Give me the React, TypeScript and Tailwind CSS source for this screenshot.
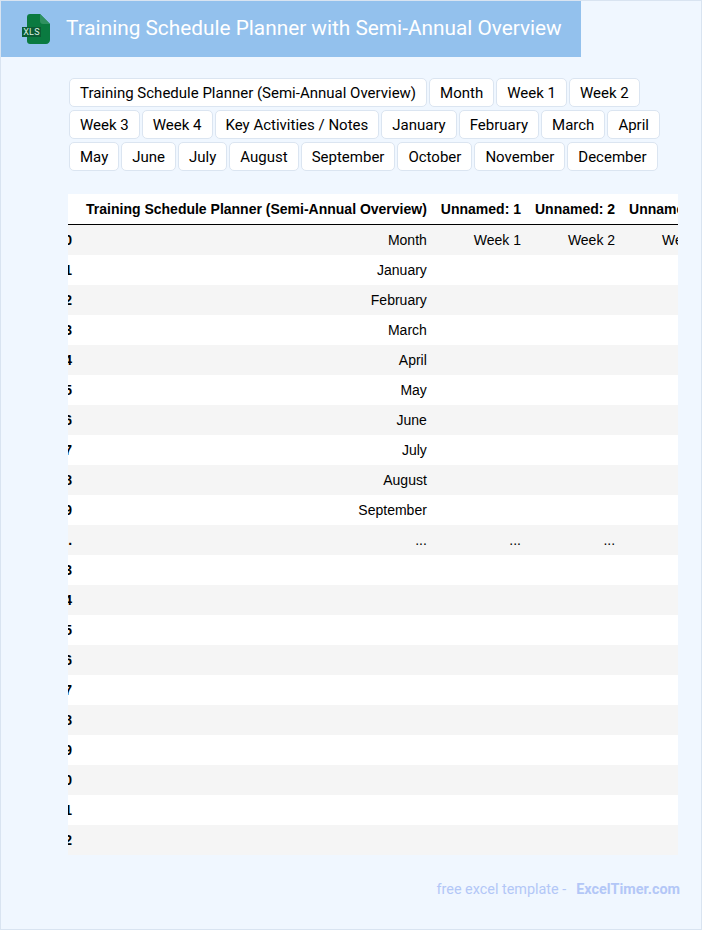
import React from "react";

const chips = [
  "Training Schedule Planner (Semi-Annual Overview)",
  "Month",
  "Week 1",
  "Week 2",
  "Week 3",
  "Week 4",
  "Key Activities / Notes",
  "January",
  "February",
  "March",
  "April",
  "May",
  "June",
  "July",
  "August",
  "September",
  "October",
  "November",
  "December",
];

const columns = [
  "Training Schedule Planner (Semi-Annual Overview)",
  "Unnamed: 1",
  "Unnamed: 2",
  "Unnamed: 3",
  "Unnamed: 4",
];

const months = ["January", "February", "March", "April", "May", "June", "July", "August", "September"];

const rows: { idx: string; cells: string[] }[] = [
  { idx: "0", cells: ["Month", "Week 1", "Week 2", "Week 3", "Week 4"] },
  ...months.map((m, i) => ({ idx: String(i + 1), cells: [m, "", "", "", ""] })),
  { idx: "...", cells: ["...", "...", "...", "...", "..."] },
  ...Array.from({ length: 10 }, (_, i) => ({ idx: String(i + 13), cells: ["", "", "", "", ""] })),
];

function XlsIcon() {
  return (
    <svg width="28" height="30" viewBox="0 0 28 30" className="shrink-0">
      <path d="M5 3C5 1.300 6.300 0 8 0H18L28 10V26C28 28.200 26.200 30 24 30H8C6.300 30 5 28.700 5 27Z" fill="#0a7a40" />
      <path d="M18 0L28 10H21C19.300 10 18 8.700 18 7Z" fill="#2f9160" />
      <rect x="0" y="13" width="19" height="10" fill="#0b5c34" />
      <text x="9.500" y="21" textAnchor="middle" fontSize="9" fontWeight="400" fill="#dcefe4" fontFamily="Roboto, sans-serif" letterSpacing="0.300">
        XLS
      </text>
    </svg>
  );
}

export default function App() {
  return (
    <div className="h-[930px] w-[702px] overflow-hidden border border-[#d9e4f1] bg-[#f0f7ff] font-['Roboto',sans-serif]">
      {/* Title bar */}
      <div className="flex h-[56px] w-[580px] items-center bg-[#93c1ed] pl-[21px]">
        <XlsIcon />
        <h1 className="ml-[16px] text-[20.8px] font-normal whitespace-nowrap text-white">
          Training Schedule Planner with Semi-Annual Overview
        </h1>
      </div>

      {/* Column chips */}
      <div className="mt-[21px] ml-[68px] flex w-[610px] flex-wrap gap-x-[2px] gap-y-[3px]">
        {chips.map((c) => (
          <span
            key={c}
            className="flex h-[29px] items-center rounded-[5px] border border-[#dbe5f1] bg-white px-[10px] pt-[2px] text-[15px] whitespace-nowrap text-black"
          >
            {c}
          </span>
        ))}
      </div>

      {/* Data preview */}
      <div className="mt-[23px] ml-[67px] w-[610px] overflow-hidden bg-white">
        <table className="-ml-[18.5px] border-separate border-spacing-0 font-['Liberation_Sans',Arial,sans-serif] text-[14px] text-black">
          <thead>
            <tr className="h-[31px]">
              <th className="border-b border-black px-[7px]"></th>
              {columns.map((c) => (
                <th key={c} className="border-b border-black px-[7px] text-right font-bold whitespace-nowrap">
                  {c}
                </th>
              ))}
            </tr>
          </thead>
          <tbody>
            {rows.map((r, i) => (
              <tr key={i} className={i % 2 === 0 ? "h-[30px] bg-[#f5f5f5]" : "h-[30px] bg-white"}>
                <th className="px-[7px] text-right font-bold whitespace-nowrap">{r.idx}</th>
                {r.cells.map((cell, j) => (
                  <td key={j} className="px-[7px] text-right whitespace-nowrap">
                    {cell}
                  </td>
                ))}
              </tr>
            ))}
          </tbody>
        </table>
      </div>

      {/* Footer */}
      <div className="mt-[24px] flex w-[679px] justify-end text-[14.4px] whitespace-nowrap text-[#b3c7f7]">
        <span>free excel template -</span>
        <span className="ml-[10px] font-bold">ExcelTimer.com</span>
      </div>
    </div>
  );
}
